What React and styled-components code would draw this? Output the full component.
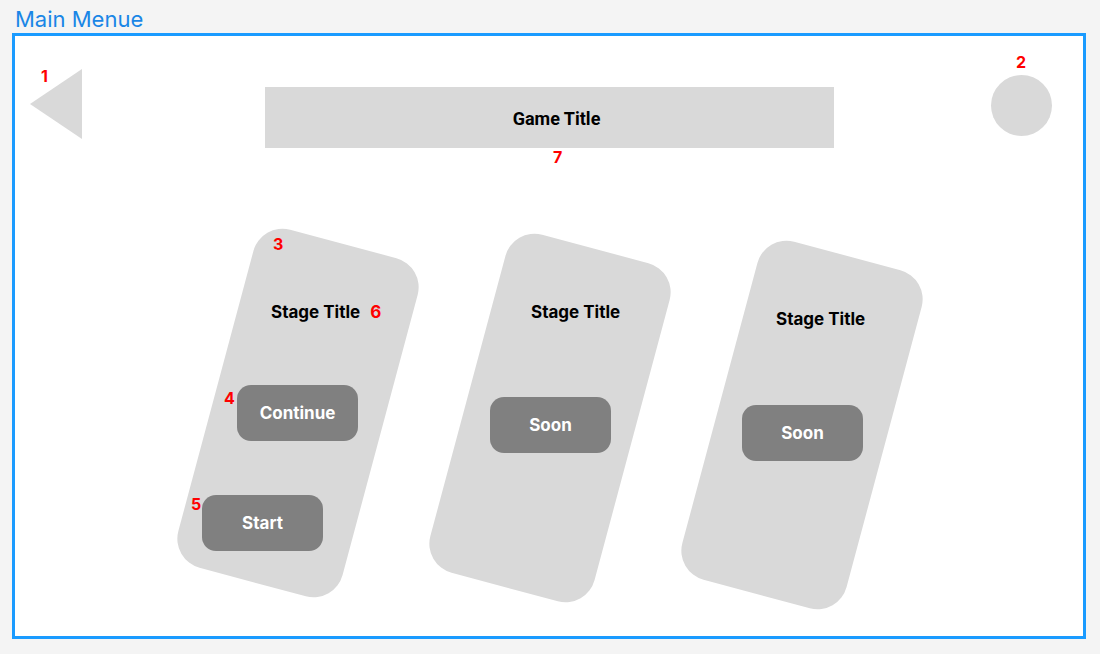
import React from "react";
import styled, { createGlobalStyle } from "styled-components";

const Global = createGlobalStyle`
  html, body {
    margin: 0;
    padding: 0;
    background: #f4f4f4;
  }
  body {
    font-family: Inter, "Noto Sans", sans-serif;
  }
`;

const Page = styled.div`
  width: 1100px;
  height: 654px;
  padding: 5px 0 0 12px;
  box-sizing: border-box;
`;

const FrameName = styled.div`
  font-family: Inter, sans-serif;
  font-size: 22px;
  line-height: 28px;
  color: #1a86e6;
  padding-left: 3px;
  height: 28px;
`;

const Frame = styled.div`
  position: relative;
  width: 1074px;
  height: 606px;
  box-sizing: border-box;
  border: 3px solid #1a9bff;
  background: #fff;
  padding: 0 0 0 15px;
`;

const Header = styled.div`
  display: flex;
  align-items: flex-start;
`;

const BackButton = styled.div`
  position: relative;
  margin-top: 33px;
  width: 52px;
  height: 70px;
  svg {
    display: block;
  }
`;

const TitleBar = styled.div`
  position: relative;
  margin: 51px 0 0 183px;
  width: 569px;
  height: 61px;
  box-sizing: border-box;
  padding: 2px 0 0 14px;
  background: #d9d9d9;
  display: flex;
  align-items: center;
  justify-content: center;
  font-family: Roboto, "Liberation Sans", sans-serif;
  font-weight: 700;
  font-size: 18px;
  color: #000;
`;

const Avatar = styled.div`
  position: relative;
  margin: 39px 0 0 157px;
  width: 61px;
  height: 61px;
  border-radius: 50%;
  background: #d9d9d9;
`;

const Tag = styled.span`
  position: absolute;
  left: ${(p) => p.$x}px;
  top: ${(p) => p.$y}px;
  font-family: Inter, sans-serif;
  font-weight: 700;
  font-size: 16px;
  line-height: 18px;
  color: #ff0000;
  z-index: 2;
`;

const InlineTag = styled.span`
  margin-left: 10px;
  color: #ff0000;
`;

const Stages = styled.div`
  display: flex;
  align-items: flex-start;
  gap: 11px;
  margin: 80px 0 0 147px;
`;

const Card = styled.div`
  position: relative;
  width: 241px;
  height: 370px;
  margin-top: ${(p) => p.$drop}px;

  &::before {
    content: "";
    position: absolute;
    left: 50%;
    top: 50%;
    width: 170px;
    height: 350px;
    margin: -175px 0 0 -85px;
    background: #d9d9d9;
    border-radius: 30px;
    transform: rotate(15deg);
  }
`;

const CardBody = styled.div`
  position: relative;
  display: flex;
  flex-direction: column;
  align-items: flex-start;
`;

const StageTitle = styled.div`
  margin: ${(p) => p.$top}px 0 0 ${(p) => p.$left}px;
  font-family: Inter, sans-serif;
  font-weight: 700;
  font-size: 17px;
  line-height: 20px;
  color: #000;
`;

const StageButton = styled.div`
  position: relative;
  margin: ${(p) => p.$top}px 0 0 ${(p) => p.$left}px;
  width: 121px;
  height: 56px;
  border-radius: 14px;
  background: #808080;
  color: #fff;
  font-family: Inter, sans-serif;
  font-weight: 700;
  font-size: 17px;
  display: flex;
  align-items: center;
  justify-content: center;
`;

export default function App() {
  return (
    <>
      <Global />
      <Page>
        <FrameName>Main Menue</FrameName>
        <Frame>
          <Header>
            <BackButton>
              <Tag $x={11} $y={-2}>1</Tag>
              <svg width="52" height="70" viewBox="0 0 52 70">
                <polygon points="0,35 52,0 52,70" fill="#d9d9d9" />
              </svg>
            </BackButton>
            <TitleBar>
              Game Title
              <Tag $x={288} $y={61}>7</Tag>
            </TitleBar>
            <Avatar>
              <Tag $x={25} $y={-22}>2</Tag>
            </Avatar>
          </Header>

          <Stages>
            <Card $drop={0}>
              <Tag $x={96} $y={7}>3</Tag>
              <CardBody>
                <StageTitle $top={74} $left={94}>
                  Stage Title<InlineTag>6</InlineTag>
                </StageTitle>
                <StageButton $top={63} $left={60}>
                  <Tag $x={-13} $y={4}>4</Tag>
                  Continue
                </StageButton>
                <StageButton $top={54} $left={25}>
                  <Tag $x={-11} $y={0}>5</Tag>
                  Start
                </StageButton>
              </CardBody>
            </Card>
            <Card $drop={5}>
              <CardBody>
                <StageTitle $top={69} $left={102}>Stage Title</StageTitle>
                <StageButton $top={75} $left={61}>Soon</StageButton>
              </CardBody>
            </Card>
            <Card $drop={12}>
              <CardBody>
                <StageTitle $top={69} $left={95}>Stage Title</StageTitle>
                <StageButton $top={76} $left={61}>Soon</StageButton>
              </CardBody>
            </Card>
          </Stages>
        </Frame>
      </Page>
    </>
  );
}
